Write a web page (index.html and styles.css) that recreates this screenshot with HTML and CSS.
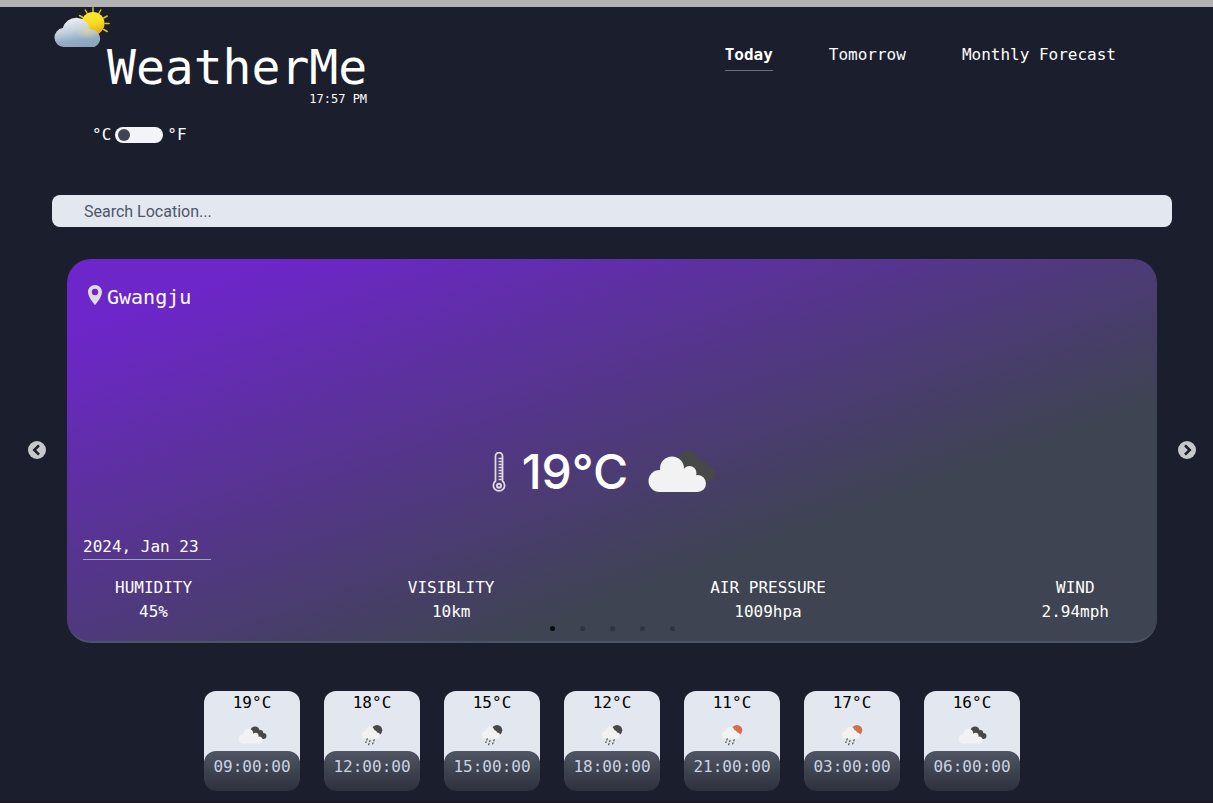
FILE: index.html
```html
<!DOCTYPE html>
<html lang="en">
<head>
<meta charset="utf-8">
<title>WeatherMe</title>
<link rel="stylesheet" href="styles.css">
</head>
<body>
<svg class="defs" aria-hidden="true">
  <defs>
    <linearGradient id="sunFill" x1="0.3" y1="0" x2="0.5" y2="1">
      <stop offset="0" stop-color="#fbe83a"/><stop offset="0.5" stop-color="#f9dc20"/><stop offset="1" stop-color="#e9a51d"/>
    </linearGradient>
    <linearGradient id="cloudFill" x1="0.3" y1="0" x2="0.6" y2="1">
      <stop offset="0" stop-color="#f0f2f8"/><stop offset="0.4" stop-color="#c8d4e0"/><stop offset="0.75" stop-color="#94adc4"/><stop offset="1" stop-color="#89a5be"/>
    </linearGradient>
    <radialGradient id="cloudGlow" cx="0.76" cy="0.45" r="0.3">
      <stop offset="0" stop-color="#e3dc9a" stop-opacity="0.6"/><stop offset="1" stop-color="#e3dc9a" stop-opacity="0"/>
    </radialGradient>
    <symbol id="clouds" viewBox="0 0 68 43">
      <g fill="#484848"><circle cx="40" cy="12" r="11"/><circle cx="53" cy="16" r="6.500"/><circle cx="60" cy="24" r="7.300"/><path d="M38 12h15l7 10-2 9H40z"/></g>
      <g fill="#f2f2f2"><circle cx="11.500" cy="31" r="11"/><circle cx="24" cy="18.500" r="12"/><circle cx="41.500" cy="23" r="7"/><circle cx="49.500" cy="33.500" r="8.500"/><path d="M11.500 42V20L40 20l10 13v9z"/></g>
    </symbol>
    <symbol id="rain" viewBox="0 0 22 21">
      <circle cx="16" cy="5.300" r="5.300" fill="currentColor"/>
      <g fill="#f2f2f2"><circle cx="4.500" cy="10" r="3.700"/><circle cx="9" cy="6.300" r="4.600"/><circle cx="13.300" cy="7.800" r="2.600"/><circle cx="16" cy="10.600" r="3.100"/><path d="M4.500 13.700V7H14l2 3.700v3z"/></g>
      <path stroke="#484848" stroke-width="1.200" stroke-linecap="round" stroke-dasharray="1.200 2" d="M6.300 13.800L4.800 17.500M9 15.500L7.600 20M13.200 14.800L11.200 20" fill="none"/>
    </symbol>
  </defs>
</svg>
<header class="header">
  <div class="brand">
    <svg class="brand-icon" viewBox="0 0 56 40" aria-hidden="true">
      <path stroke="#dec522" stroke-width="1.500" stroke-linecap="round" d="M39 .8v4M46.800 3l-2 3.500M53.200 9l-3.500 2M55 16.500h-4M53.200 24.500l-3.500-2M31.300 3l2 3.500M25.500 8.500l3.500 2"/>
      <circle cx="39" cy="16.500" r="11.500" fill="url(#sunFill)"/>
      <path fill="url(#cloudFill)" d="M9.500 40a9.500 9.500 0 0 1-.8-18.900a14 14 0 0 1 27.300 1.100a9.300 9.300 0 0 1 4.500 17.800z"/>
      <path fill="url(#cloudGlow)" d="M9.500 40a9.500 9.500 0 0 1-.8-18.900a14 14 0 0 1 27.300 1.100a9.300 9.300 0 0 1 4.500 17.800z"/>
    </svg>
    <div class="brand-text">
      <h1 class="title">WeatherMe</h1>
      <time class="clock">17:57 PM</time>
    </div>
    <div class="units">
      <label for="unit">°C</label>
      <input class="toggle" type="checkbox" role="switch" id="unit">
      <label for="unit">°F</label>
    </div>
  </div>
  <nav class="nav">
    <a class="nav-link active" href="#today">Today</a>
    <a class="nav-link" href="#tomorrow">Tomorrow</a>
    <a class="nav-link" href="#monthly">Monthly Forecast</a>
  </nav>
</header>
<main>
  <form class="search">
    <input class="search-input" type="text" placeholder="Search Location..." aria-label="Search Location">
  </form>
  <section class="carousel">
    <button class="arrow" type="button" aria-label="Previous">
      <svg viewBox="0 0 18 18"><circle cx="9" cy="9" r="9" fill="#c7c8cb"/><path d="M11 4.300L6.300 9l4.700 4.700" fill="none" stroke="#1a1d2d" stroke-width="2.600"/></svg>
    </button>
    <article class="weather">
      <div class="city">
        <svg class="pin" viewBox="0 0 24 24" aria-hidden="true"><path fill="#e0dadc" fill-rule="evenodd" d="M12 2C8.100 2 5 5.100 5 9c0 5.200 7 13 7 13s7-7.800 7-13c0-3.900-3.100-7-7-7zm0 10.200a3.200 3.200 0 1 1 0-6.400a3.200 3.200 0 0 1 0 6.400z"/></svg>
        <h2 class="city-name">Gwangju</h2>
      </div>
      <div class="current">
        <svg class="thermo" viewBox="0 0 14 40" fill="none" stroke="#e0dadc" aria-hidden="true">
          <path stroke-width="1.800" d="M3.500 29V4a3.500 3.500 0 0 1 7 0v25a5.600 5.600 0 1 1-7 0z"/>
          <circle cx="7" cy="33.700" r="2" stroke-width="2"/>
          <path stroke-width="1.400" d="M6.500 6.500h4M6.500 9.500h4M6.500 12.500h4M6.500 15.500h4M6.500 18.500h4M6.500 21.500h4M6.500 24.500h4M6.500 27.500h4"/>
        </svg>
        <p class="degrees">19°C</p>
        <svg class="sky" aria-hidden="true"><use href="#clouds"/></svg>
      </div>
      <p class="date">2024, Jan 23</p>
      <dl class="stats">
        <div><dt>HUMIDITY</dt><dd>45%</dd></div>
        <div><dt>VISIBLITY</dt><dd>10km</dd></div>
        <div><dt>AIR PRESSURE</dt><dd>1009hpa</dd></div>
        <div><dt>WIND</dt><dd>2.94mph</dd></div>
      </dl>
      <div class="dots">
        <button class="dot current-dot" type="button" aria-label="Slide 1"></button>
        <button class="dot" type="button" aria-label="Slide 2"></button>
        <button class="dot" type="button" aria-label="Slide 3"></button>
        <button class="dot" type="button" aria-label="Slide 4"></button>
        <button class="dot" type="button" aria-label="Slide 5"></button>
      </div>
    </article>
    <button class="arrow" type="button" aria-label="Next">
      <svg viewBox="0 0 18 18"><circle cx="9" cy="9" r="9" fill="#c7c8cb"/><path d="M7 4.300L11.700 9L7 13.700" fill="none" stroke="#1a1d2d" stroke-width="2.600"/></svg>
    </button>
  </section>
  <ul class="hours">
    <li class="hour"><span class="hour-temp">19°C</span><span class="hour-icon"><svg class="small-clouds"><use href="#clouds"/></svg></span><time class="hour-time">09:00:00</time></li>
    <li class="hour"><span class="hour-temp">18°C</span><span class="hour-icon"><svg class="small-rain"><use href="#rain"/></svg></span><time class="hour-time">12:00:00</time></li>
    <li class="hour"><span class="hour-temp">15°C</span><span class="hour-icon"><svg class="small-rain"><use href="#rain"/></svg></span><time class="hour-time">15:00:00</time></li>
    <li class="hour"><span class="hour-temp">12°C</span><span class="hour-icon"><svg class="small-rain"><use href="#rain"/></svg></span><time class="hour-time">18:00:00</time></li>
    <li class="hour"><span class="hour-temp">11°C</span><span class="hour-icon"><svg class="small-rain day"><use href="#rain"/></svg></span><time class="hour-time">21:00:00</time></li>
    <li class="hour"><span class="hour-temp">17°C</span><span class="hour-icon"><svg class="small-rain day"><use href="#rain"/></svg></span><time class="hour-time">03:00:00</time></li>
    <li class="hour"><span class="hour-temp">16°C</span><span class="hour-icon"><svg class="small-clouds"><use href="#clouds"/></svg></span><time class="hour-time">06:00:00</time></li>
  </ul>
</main>
</body>
</html>
```
FILE: styles.css
```css
* { box-sizing: border-box; margin: 0; padding: 0; }

body {
  min-height: 100vh;
  background: #1b1e2d;
  border-top: 7px solid #b2b2b2;
  border-bottom: 2px solid #1a1727;
  color: #fff;
  font: 16px/24px "DejaVu Sans Mono", monospace;
}

button { border: 0; background: none; cursor: pointer; }
svg { display: block; }
.defs { position: absolute; width: 0; height: 0; }

.header {
  display: flex;
  justify-content: space-between;
  align-items: flex-start;
  padding: 0 41px 0 54px;
}
.brand-icon { width: 56px; height: 40px; }
.brand-text {
  display: flex;
  flex-direction: column;
  align-items: flex-end;
  gap: 4px;
  padding-left: 53px;
}
.title { font-size: 48px; font-weight: 400; line-height: 40px; }
.clock { font-size: 12px; line-height: 16px; }
.units { display: flex; align-items: center; gap: 4px; margin-top: 16px; padding-left: 38px; }

.toggle {
  appearance: none;
  width: 48px;
  height: 16px;
  padding: 2px 3px;
  border-radius: 8px;
  background: #f3f4f7;
  cursor: pointer;
}
.toggle::before {
  content: "";
  display: block;
  width: 12px;
  height: 12px;
  border-radius: 50%;
  background: #3e4451;
}
.toggle:checked::before { margin-left: auto; }

.nav { display: flex; gap: 56px; padding: 36px 56px 0 0; }
.nav-link { padding-bottom: 3px; color: #fff; text-decoration: none; border-bottom: 1px solid transparent; }
.nav-link.active { font-weight: 700; border-color: #6b7080; }

.search { padding: 48px 41px 32px 52px; }
.search-input {
  display: block;
  width: 100%;
  height: 32px;
  padding: 0 32px;
  border: 0;
  border-radius: 8px;
  background: #e2e7f0;
  color: #3e4451;
  font: 16px "Roboto", sans-serif;
}
.search-input::placeholder { color: #4f5668; opacity: 1; }

.carousel { display: flex; align-items: center; gap: 21px; padding: 0 17px 0 28px; }
.arrow { flex: none; width: 18px; height: 18px; margin-bottom: 2px; }

.weather {
  position: relative;
  flex: 1;
  display: flex;
  flex-direction: column;
  min-height: 384px;
  padding: 24px 16px 17px;
  border-bottom: 2px solid #4c5468;
  border-radius: 24px;
  background: linear-gradient(160deg, #6d26c9 10%, #3e4451 70%);
}
.city { display: flex; align-items: flex-start; }
.pin { width: 24px; height: 24px; }
.city-name { font-size: 20px; font-weight: 400; line-height: 28px; }

.current {
  flex: 1;
  display: flex;
  justify-content: center;
  align-items: flex-end;
  gap: 16px;
  padding: 0 16px 39px 0;
}
.thermo { width: 14px; height: 40px; margin-bottom: 4px; }
.degrees { font: 500 48px/48px "Inter", sans-serif; }
.sky { width: 68px; height: 43px; margin: 0 0 3px 4px; }

.date { width: 128px; margin-bottom: 16px; border-bottom: 1px solid #a0a5be; }
.stats { display: flex; justify-content: space-between; padding: 0 32px; text-align: center; }

.dots { position: absolute; left: 0; right: 0; bottom: 8px; display: flex; justify-content: center; gap: 20px; }
.dot { width: 10px; height: 10px; opacity: 0.3; }
.dot::before { content: ""; display: block; width: 5px; height: 5px; margin: auto; border-radius: 50%; background: #0c0c10; }
.current-dot { opacity: 1; }

.hours {
  display: flex;
  justify-content: center;
  gap: 24px;
  padding: 48px 41px 10px 52px;
  list-style: none;
}
.hour {
  display: flex;
  flex-direction: column;
  width: 96px;
  height: 100px;
  overflow: hidden;
  border-radius: 12px;
  background: linear-gradient(#e2e7f0 70%, transparent 70%);
  color: #000;
  text-align: center;
}
.hour-icon { flex: 1; display: flex; justify-content: center; align-items: center; padding-top: 4px; }
.small-clouds { width: 29px; height: 18px; }
.small-rain { width: 22px; height: 21px; color: #484848; }
.small-rain.day { color: #d76f4c; }
.hour-time {
  height: 40px;
  border-radius: 12px;
  background: linear-gradient(#505664, #2d313d);
  color: #cbd2e2;
  line-height: 32px;
}
```
